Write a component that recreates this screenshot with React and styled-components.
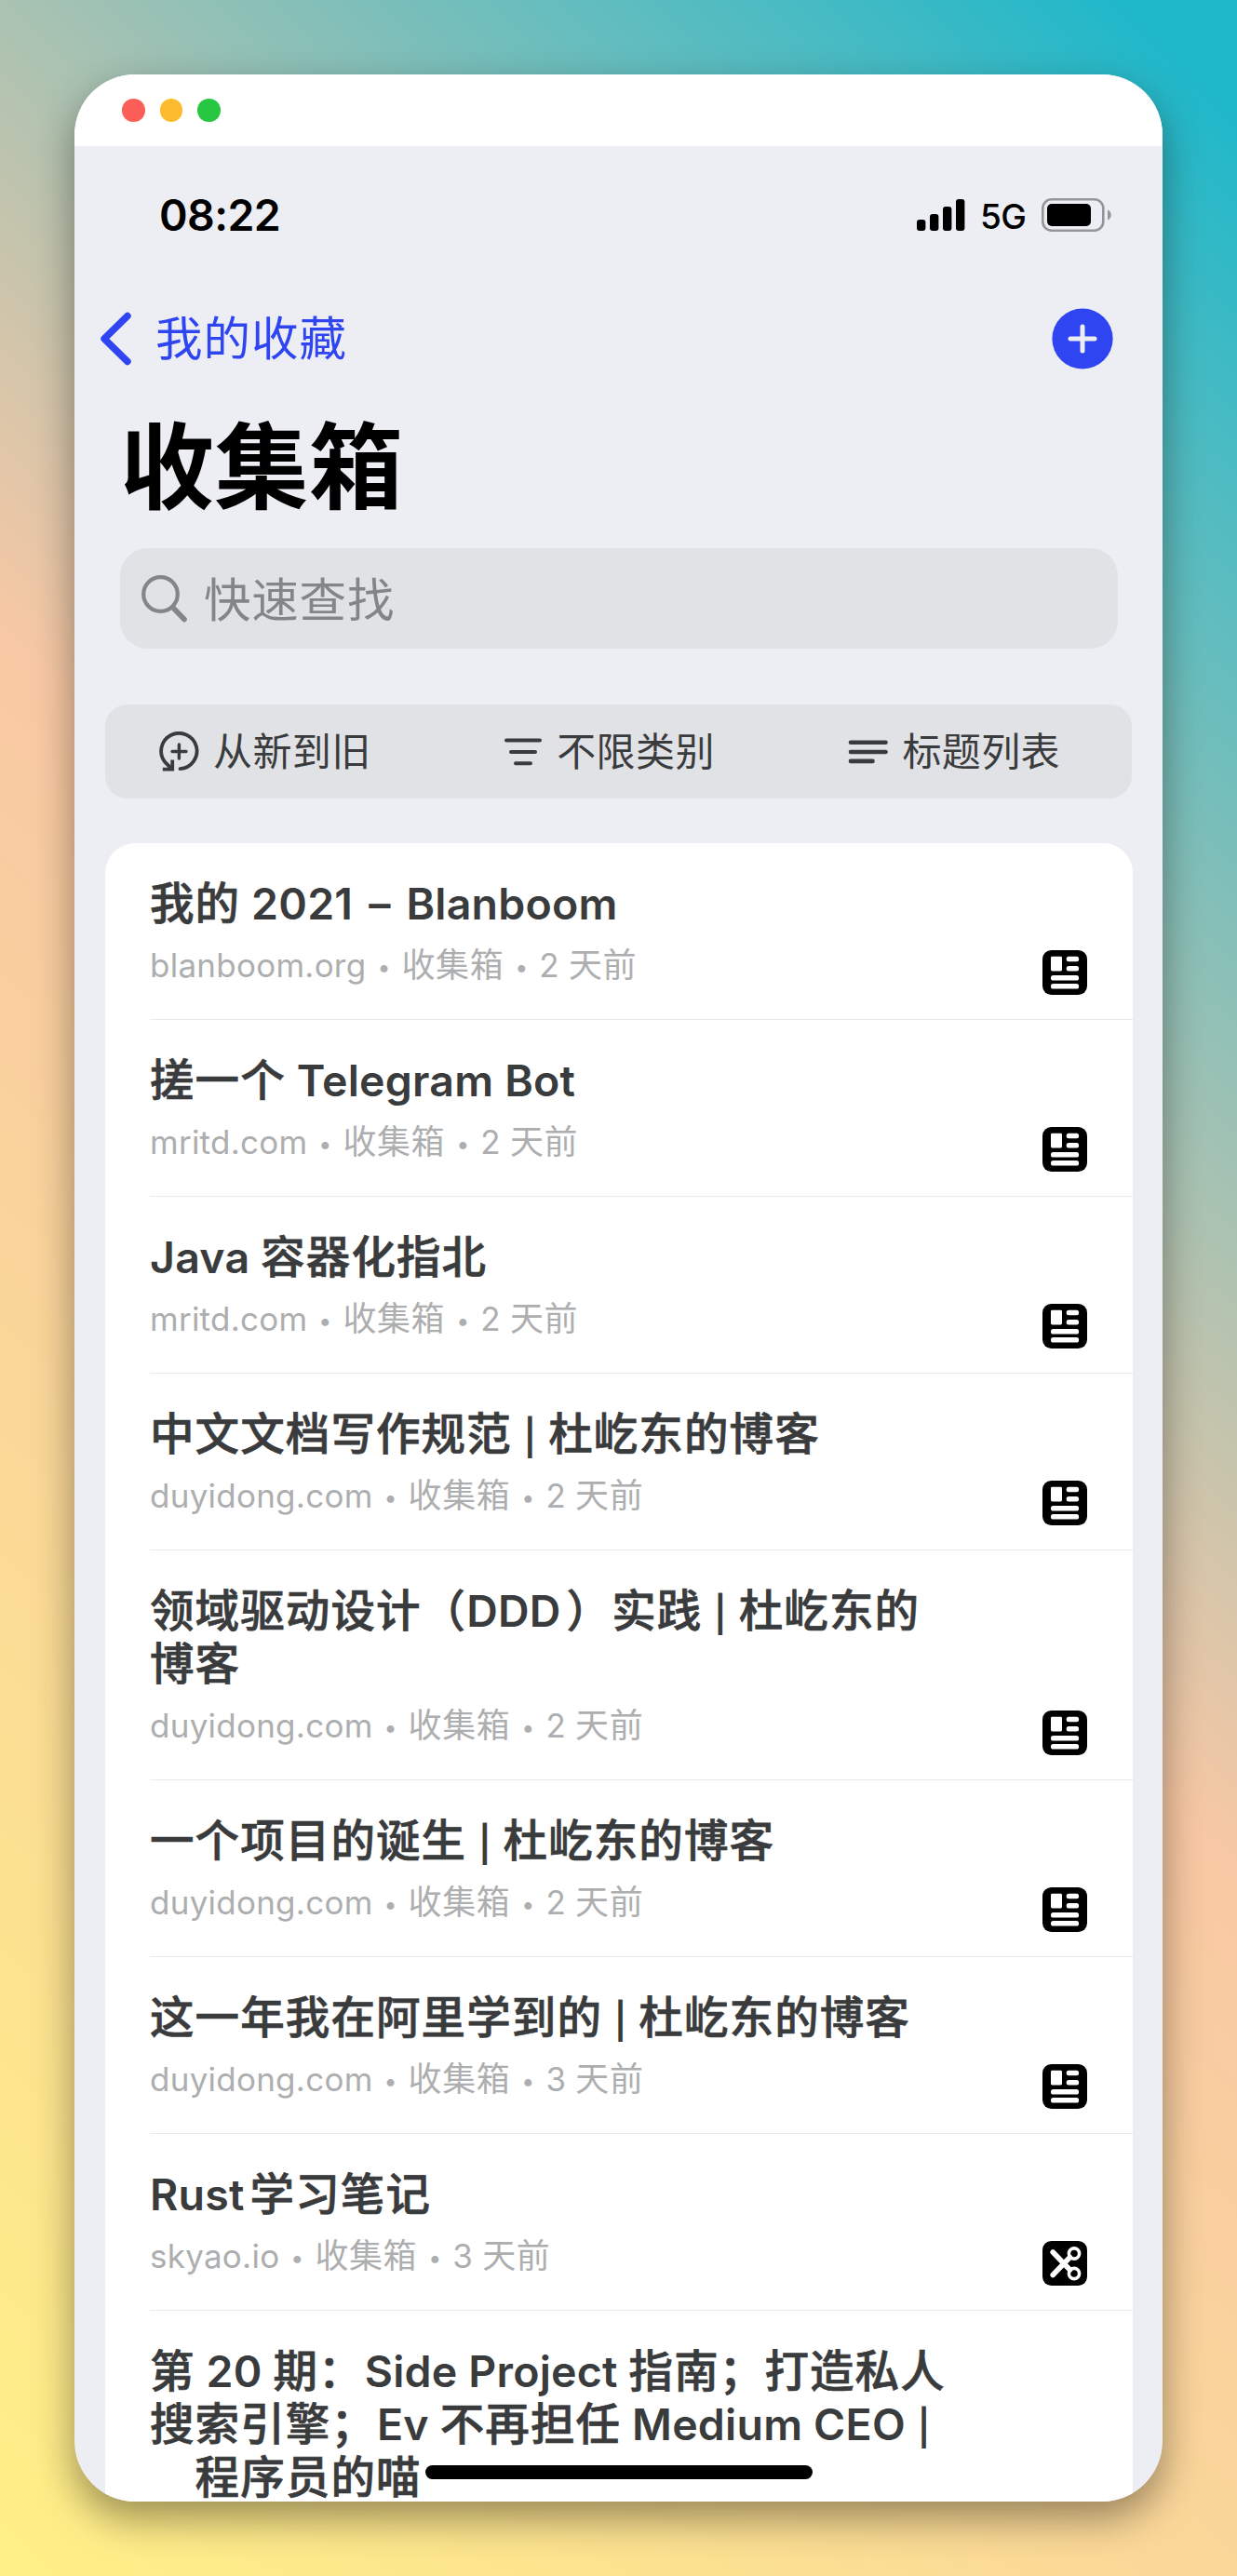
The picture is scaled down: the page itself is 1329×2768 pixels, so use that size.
import React from "react";
import styled, { createGlobalStyle } from "styled-components";

const sans = `Inter, "Noto Sans CJK SC", sans-serif`;
const ink = "#3a3b3d";
const blue = "#2f45f2";

const GlobalStyle = createGlobalStyle`
  * { box-sizing: border-box; }
  body { margin: 0; font-family: ${sans}; }
  svg { display: block; flex: none; }
`;

const Backdrop = styled.div`
  width: 1329px;
  height: 2768px;
  padding: 80px;
  background: linear-gradient(225deg, #1fb8ca 3%, #f8c8a4 49%, #fff086 100%);
`;

const Window = styled.main`
  position: relative;
  display: flex;
  flex-direction: column;
  width: 1169px;
  height: 2608px;
  overflow: hidden;
  border-radius: 65px;
  background: #edeef3;
  box-shadow: 0 18px 44px rgba(0, 0, 0, 0.4);
`;

const TitleBar = styled.div`
  display: flex;
  flex: none;
  align-items: center;
  gap: 16px;
  height: 77px;
  padding: 0 51px;
  background: #fff;
`;

const Dot = styled.span`
  width: 24.5px;
  height: 24.5px;
  border-radius: 50%;
  background: ${(p) => p.$color};
`;

const StatusBar = styled.div`
  display: flex;
  flex: none;
  align-items: center;
  justify-content: space-between;
  height: 148px;
  padding: 0 55px 0 91px;
`;

const Clock = styled.time`
  margin-top: -1px;
  font-size: 46.5px;
  font-weight: 600;
  letter-spacing: -0.6px;
  color: #000;
`;

const Indicators = styled.div`
  display: flex;
  align-items: center;
`;

const Network = styled.span`
  margin: 3px 17px 0 16px;
  font-size: 37px;
  font-weight: 500;
  line-height: 40px;
  letter-spacing: -0.8px;
`;

const NavBar = styled.nav`
  display: flex;
  flex: none;
  align-items: center;
  justify-content: space-between;
  height: 118px;
  padding: 0 53px 0 28px;
`;

const Back = styled.a`
  display: flex;
  align-items: center;
  gap: 26px;
  font-size: 50.5px;
  line-height: 60px;
  letter-spacing: 1px;
  color: ${blue};
`;

const Heading = styled.h1`
  flex: none;
  margin: 24px 0 0 49px;
  font-size: 101px;
  font-weight: 700;
  line-height: 110px;
  letter-spacing: 0.5px;
  color: #000;
`;

const Search = styled.div`
  display: flex;
  flex: none;
  align-items: center;
  gap: 17px;
  height: 108px;
  margin: 32px 48px 0 49px;
  padding: 0 23px;
  border-radius: 30px;
  background: #e1e2e5;
  font-size: 50.5px;
  letter-spacing: 0.8px;
  color: #848587;
`;

const Placeholder = styled.span`
  padding-bottom: 5px;
`;

const Filters = styled.div`
  display: flex;
  flex: none;
  align-items: center;
  justify-content: space-between;
  height: 101px;
  margin: 60px 33px 0;
  padding: 0 77px 0 58px;
  border-radius: 24px;
  background: #e1e2e5;
`;

const Filter = styled.button`
  display: flex;
  align-items: center;
  gap: ${(p) => p.$gap}px;
  padding: 0;
  border: 0;
  background: none;
  font: 400 42px/50px ${sans};
  letter-spacing: 0.4px;
  color: ${ink};
`;

const List = styled.section`
  flex: 1;
  margin: 48px 32px 0 33px;
  padding-left: 48px;
  border-radius: 32px 32px 0 0;
  background: #fff;
`;

const Row = styled.article`
  display: flex;
  align-items: flex-end;
  justify-content: space-between;
  padding: 36px 49px 26px 0;
  border-bottom: 1.5px solid #e9eaec;
  white-space: pre;
`;

const RowText = styled.div`
  padding-bottom: 8px;
`;

const RowTitle = styled.h2`
  margin: 0;
  font-size: 47.5px;
  font-weight: 600;
  color: ${ink};
`;

const Line = styled.div`
  height: 57px;
  line-height: 57px;
`;

const Meta = styled.div`
  height: 50px;
  margin-top: 12px;
  font-size: 36px;
  line-height: 52px;
  color: #adaeaf;
`;

const Latin = styled.span`
  margin-left: ${(p) => p.$lead}px;
  font-size: ${(p) => p.$size}px;
  letter-spacing: ${(p) => p.$track}px;
`;

const Han = styled.span`
  margin-left: ${(p) => p.$lead}px;
  font-weight: ${(p) => (p.$bold ? 500 : 400)};
  letter-spacing: ${(p) => p.$track}px;
  -webkit-text-stroke: ${(p) => (p.$bold ? "0.7px currentColor" : "0")};
`;

const Pipe = styled.span`
  display: inline-block;
  width: 15.5px;
  font-size: 38px;
  line-height: 1;
  text-align: center;
`;

const Dash = styled.span`
  padding: 0 5px;
`;

const Bullet = styled.span`
  display: inline-block;
  width: 38px;
  font-size: 25px;
  line-height: 1;
  text-align: center;
  vertical-align: 2px;
`;

const HomeIndicator = styled.div`
  position: absolute;
  bottom: 24px;
  left: 377px;
  width: 416px;
  height: 15px;
  border-radius: 8px;
  background: #000;
`;

/* Space between two runs that meet without a space character. */
function leadFor(previous, isLatin) {
  if (!previous || /[ （]$/.test(previous)) return 0;
  return isLatin ? 1 : 6;
}

/* Latin and Han runs carry their own size and tracking. */
function Mixed({ text, size, latinTrack, hanTrack, bold }) {
  const runs = text.split(/([\x20-\x7e–]+)/).filter(Boolean);
  return runs.map((run, i) => {
    const isLatin = /^[\x20-\x7e–]/.test(run);
    const lead = run[0] === " " ? 0 : leadFor(runs[i - 1], isLatin);
    if (!isLatin) {
      return <Han key={i} $lead={lead} $track={hanTrack} $bold={bold}>{run}</Han>;
    }
    return (
      <Latin key={i} $lead={lead} $size={size} $track={latinTrack}>
        {run.split(/([|–])/).map((part, j) => {
          if (part === "|") return <Pipe key={j}>|</Pipe>;
          if (part === "–") return <Dash key={j}>–</Dash>;
          return part;
        })}
      </Latin>
    );
  });
}

const SignalIcon = () => (
  <svg width="52" height="34" viewBox="0 0 52 34">
    <rect x="0" y="22" width="9.4" height="12" rx="3" />
    <rect x="14" y="16" width="9.4" height="18" rx="3" />
    <rect x="28" y="8" width="9.4" height="26" rx="3" />
    <rect x="42" y="0" width="9.4" height="34" rx="3" />
  </svg>
);

const BatteryIcon = () => (
  <svg width="75" height="36" viewBox="0 0 75 36">
    <rect x="1.3" y="1.3" width="65" height="33.4" rx="9.5" fill="none" stroke="#949597" strokeWidth="2.6" />
    <rect x="6" y="6" width="47" height="24" rx="5" />
    <path d="M71 12.5c5 1.8 5 9.2 0 11z" fill="#949597" />
  </svg>
);

const ChevronIcon = () => (
  <svg width="33" height="58" viewBox="0 0 33 58">
    <path d="M29 4.5 4 29l25 24.5" fill="none" stroke={blue} strokeWidth="7.4" strokeLinecap="round" strokeLinejoin="round" />
  </svg>
);

const AddIcon = () => (
  <svg width="66" height="66" viewBox="0 0 66 66">
    <circle cx="33" cy="33" r="32.6" fill={blue} />
    <path d="M33 20v26M20 33h26" stroke="#edeef3" strokeWidth="5" strokeLinecap="round" />
  </svg>
);

const SearchIcon = () => (
  <svg width="50" height="52" viewBox="0 0 50 52">
    <circle cx="20.5" cy="21.5" r="18.3" fill="none" stroke="#848587" strokeWidth="4.2" />
    <path d="m34 36 12 12.5" stroke="#848587" strokeWidth="5.6" strokeLinecap="round" />
  </svg>
);

const RecentIcon = () => (
  <svg width="43" height="43" viewBox="0 0 43 43" fill="none" stroke={ink} strokeWidth="3.8" strokeLinecap="round">
    <path d="M22.5 40.2A19.2 19.2 0 1 0 6.5 33.2l6 6" strokeLinejoin="round" />
    <path d="M21.4 14v15M14 21.5h15" strokeWidth="3.4" />
    <path d="M3.8 40.6h10.4V30.5" strokeLinecap="butt" />
  </svg>
);

const FunnelIcon = () => (
  <svg width="40" height="30" viewBox="0 0 40 30">
    <path d="M2 2.4h36M7 15h26M12 27.2h16" stroke={ink} strokeWidth="4" strokeLinecap="round" />
  </svg>
);

const LinesIcon = () => (
  <svg width="43" height="30" viewBox="0 0 43 30">
    <path d="M3 4.8h37.5M3 15h37.5M3 24.9h23.5" stroke={ink} strokeWidth="4.6" strokeLinecap="round" />
  </svg>
);

const ArticleIcon = () => (
  <svg width="48" height="48" viewBox="0 0 48 48">
    <rect width="48" height="48" rx="9.5" />
    <g fill="#fff">
      <rect x="9" y="6.8" width="12" height="15.6" rx="1.4" />
      <rect x="25.7" y="6.8" width="13.4" height="5.4" rx="2.5" />
      <rect x="25.7" y="17" width="13.4" height="5.4" rx="2.5" />
      <rect x="9" y="26.9" width="30.1" height="5.6" rx="2.6" />
      <rect x="9" y="36" width="30.1" height="5.6" rx="2.6" />
    </g>
  </svg>
);

const ClipIcon = () => (
  <svg width="48" height="48" viewBox="0 0 48 48">
    <rect width="48" height="48" rx="9.5" />
    <g fill="none" stroke="#fff" strokeLinecap="round">
      <path d="M11.2 12 29.5 31M11.2 36.5 29.5 17.5" strokeWidth="5.6" />
      <circle cx="34" cy="13.5" r="5.6" strokeWidth="3.6" />
      <circle cx="34" cy="35" r="5.6" strokeWidth="3.6" />
    </g>
  </svg>
);

const items = [
  { lines: ["我的 2021 – Blanboom"], site: "blanboom.org", age: "2 天前" },
  { lines: ["搓一个 Telegram Bot"], site: "mritd.com", age: "2 天前" },
  { lines: ["Java 容器化指北"], site: "mritd.com", age: "2 天前" },
  { lines: ["中文文档写作规范 | 杜屹东的博客"], site: "duyidong.com", age: "2 天前" },
  { lines: ["领域驱动设计（DDD）实践 | 杜屹东的", "博客"], site: "duyidong.com", age: "2 天前" },
  { lines: ["一个项目的诞生 | 杜屹东的博客"], site: "duyidong.com", age: "2 天前" },
  { lines: ["这一年我在阿里学到的 | 杜屹东的博客"], site: "duyidong.com", age: "3 天前" },
  { lines: ["Rust学习笔记"], site: "skyao.io", age: "3 天前", clip: true },
  { lines: ["第 20 期：Side Project 指南；打造私人", "搜索引擎；Ev 不再担任 Medium CEO |", "\u3000程序员的喵"] },
];

const MetaText = ({ text }) => (
  <Mixed text={text} size={35} latinTrack={0.25} hanTrack={0.6} />
);

export default function App() {
  return (
    <Backdrop>
      <GlobalStyle />
      <Window>
        <TitleBar>
          <Dot $color="#fb5f57" />
          <Dot $color="#fdbc2f" />
          <Dot $color="#28c741" />
        </TitleBar>
        <StatusBar>
          <Clock>08:22</Clock>
          <Indicators>
            <SignalIcon />
            <Network>5G</Network>
            <BatteryIcon />
          </Indicators>
        </StatusBar>
        <NavBar>
          <Back>
            <ChevronIcon />
            我的收藏
          </Back>
          <AddIcon />
        </NavBar>
        <Heading>收集箱</Heading>
        <Search>
          <SearchIcon />
          <Placeholder>快速查找</Placeholder>
        </Search>
        <Filters>
          <Filter $gap={15}><RecentIcon />从新到旧</Filter>
          <Filter $gap={16}><FunnelIcon />不限类别</Filter>
          <Filter $gap={15}><LinesIcon />标题列表</Filter>
        </Filters>
        <List>
          {items.map((item, i) => (
            <Row key={i}>
              <RowText>
                <RowTitle>
                  {item.lines.map((line) => (
                    <Line key={line}>
                      <Mixed text={line} size={46.5} latinTrack={0.2} hanTrack={1.1} bold />
                    </Line>
                  ))}
                </RowTitle>
                {item.site && (
                  <Meta>
                    <MetaText text={item.site} />
                    <Bullet>•</Bullet>
                    <MetaText text="收集箱" />
                    <Bullet>•</Bullet>
                    <MetaText text={item.age} />
                  </Meta>
                )}
              </RowText>
              {item.site && (item.clip ? <ClipIcon /> : <ArticleIcon />)}
            </Row>
          ))}
        </List>
        <HomeIndicator />
      </Window>
    </Backdrop>
  );
}
